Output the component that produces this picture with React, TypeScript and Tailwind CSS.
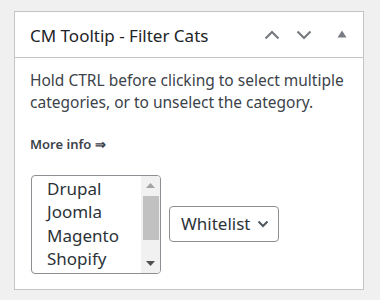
export default function App() {
  const cats = ["Drupal", "Joomla", "Magento", "Shopify"];
  return (
    <main
      className="w-[380px] h-[300px] bg-[#f0f0f1] pt-[11px] pl-[14px] overflow-hidden"
      style={{ fontFamily: '"Noto Sans", "Open Sans", sans-serif' }}
    >
      <section className="w-[350px] h-[279px] bg-white border border-[#c3c4c7] flex flex-col">
        <div className="h-[46px] border-b border-[#c3c4c7] flex items-center pl-[15px] pr-[16px]">
          <h2 className="text-[17px] text-[#1d2327] flex-1 pt-[2px]">CM Tooltip - Filter Cats</h2>
          <div className="flex items-center text-[#787c82]">
            <svg width="16" height="10" viewBox="0 0 16 10" className="mr-[16px]">
              <path d="M1.5 8.5 L8 2 L14.5 8.5" fill="none" stroke="#787c82" strokeWidth="2.2" />
            </svg>
            <svg width="16" height="10" viewBox="0 0 16 10" className="mr-[25px]">
              <path d="M1.5 1.5 L8 8 L14.5 1.5" fill="none" stroke="#787c82" strokeWidth="2.2" />
            </svg>
            <svg width="10" height="8" viewBox="0 0 10 8" className="mb-[2px]">
              <path d="M5 0.5 L9.5 7.5 L0.5 7.5 Z" fill="#787c82" />
            </svg>
          </div>
        </div>

        <div className="px-[15px] pt-[11px] text-[#3c434a]">
          <p className="text-[15.5px] leading-[22px]">
            Hold CTRL before clicking to select multiple categories, or to unselect the category.
          </p>
          <p className="mt-[22px] text-[13px] font-semibold">More info ⇒</p>

          <div className="flex items-center mt-[20px] ml-[1px]">
            <div className="w-[130px] h-[99px] border border-[#8c8f94] rounded-[4px] flex overflow-hidden">
              <ul className="flex-1 pl-[15px] pt-[1px] text-[17px] leading-[23.5px] text-[#2c3338]">
                {cats.map((c) => (
                  <li key={c}>{c}</li>
                ))}
              </ul>
              <div className="w-[19px] bg-[#f1f1f1] flex flex-col items-center">
                <div className="h-[20px] flex items-center justify-center">
                  <svg width="9" height="5" viewBox="0 0 9 5">
                    <path d="M4.5 0 L9 5 L0 5 Z" fill="#a3a3a3" />
                  </svg>
                </div>
                <div className="w-[16px] h-[44px] bg-[#c1c1c1]" />
                <div className="flex-1 flex items-end justify-center pb-[7px]">
                  <svg width="9" height="5" viewBox="0 0 9 5">
                    <path d="M0 0 L9 0 L4.5 5 Z" fill="#505050" />
                  </svg>
                </div>
              </div>
            </div>

            <div className="ml-[8px] h-[36px] border border-[#8c8f94] rounded-[4px] flex items-center pl-[11px] pr-[9px] text-[17px] text-[#2c3338]">
              <span>Whitelist</span>
              <svg width="12" height="8" viewBox="0 0 12 8" className="ml-[7px]">
                <path d="M1.5 1.5 L6 6 L10.5 1.5" fill="none" stroke="#50575e" strokeWidth="2" />
              </svg>
            </div>
          </div>
        </div>
      </section>
    </main>
  );
}
